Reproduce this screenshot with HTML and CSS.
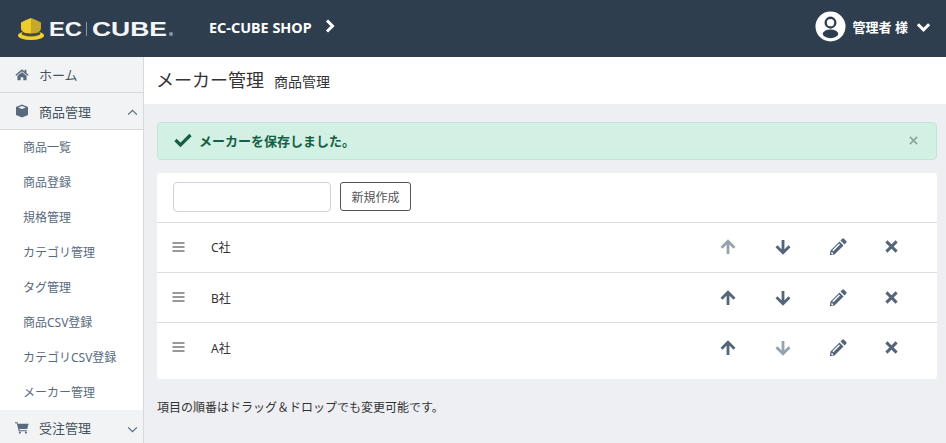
FILE: index.html
```html
<!DOCTYPE html>
<html lang="ja">
<head>
    <meta charset="UTF-8">
    <title>メーカー管理 商品管理</title>
    <link rel="stylesheet" href="styles.css">
</head>
<body>
    <header class="topbar">
        <div class="brand">
            <svg class="brand-hat" viewBox="0 0 26 22" width="26" height="22">
                <ellipse cx="13" cy="17.500" rx="13" ry="4.500" fill="#f2d22c"/>
                <ellipse cx="13" cy="15.500" rx="9.500" ry="3" fill="#4b4a3c"/>
                <path d="M3 4.500Q8 1.500 13 0V15.500Q6 15.500 4 13Q3 11.500 3 10z" fill="#f0cc2a"/>
                <path d="M23 4.500Q18 1.500 13 0V15.500Q20 15.500 22 13Q23 11.500 23 10z" fill="#c4a92b"/>
            </svg>
            <svg class="brand-word" viewBox="0 0 126 20" width="126" height="20">
                <text x="0" y="17" textLength="33" lengthAdjust="spacingAndGlyphs" class="brand-text">EC</text>
                <rect x="37" y="3" width="1" height="14" fill="#8a96a0"/>
                <text x="43" y="17" textLength="75" lengthAdjust="spacingAndGlyphs" class="brand-text">CUBE</text>
                <circle cx="122" cy="15" r="2" fill="#8a96a0"/>
            </svg>
        </div>
        <div class="shop">EC-CUBE SHOP</div>
        <svg class="shop-arrow" viewBox="0 0 10 14" width="10" height="14"><path d="M2 1.500 7.500 7 2 12.500" fill="none" stroke="#fff" stroke-width="3"/></svg>
        <div class="user">
            <svg viewBox="0 0 32 32" width="31" height="31">
                <circle cx="16" cy="16" r="15.500" fill="#fff"/>
                <circle cx="16" cy="12" r="5" fill="none" stroke="#2f3e4f" stroke-width="2.400"/>
                <ellipse cx="16" cy="23.500" rx="8" ry="4.500" fill="#2f3e4f"/>
            </svg>
            <span class="user-name">管理者 様</span>
            <svg viewBox="0 0 16 10" width="15" height="10"><path d="M2 2 8 8 14 2" fill="none" stroke="#fff" stroke-width="3.200"/></svg>
        </div>
    </header>
    <div class="layout">
        <nav class="sidenav">
            <div class="nav-top">
                <svg class="nav-icon" viewBox="0 0 16 14" width="14" height="13"><path d="M8 1 0.500 7.200 1.500 8.400 8 3.200l6.500 5.200 1-1.200L13 5.100V1.500h-2v2L8 1zM8 4.300 2.800 8.500V13.500h3.700V10h3v3.500h3.700V8.500L8 4.300z" fill="#586b7e"/></svg>
                <span>ホーム</span>
            </div>
            <div class="nav-top nav-open">
                <svg class="nav-icon" viewBox="0 0 14 14" width="14" height="14"><path d="M7 0.500 13 3v8l-6 2.500L1 11V3z" fill="#586b7e"/><path d="M3.200 3.400 7 1.900l3.800 1.500L7 4.900z" fill="#f2f3f5"/></svg>
                <span>商品管理</span>
                <svg class="nav-caret" viewBox="0 0 12 8" width="11" height="7"><path d="M1 6.500 6 1.500l5 5" fill="none" stroke="#586b7e" stroke-width="1.400"/></svg>
            </div>
            <ul class="subnav">
                <li>商品一覧</li>
                <li>商品登録</li>
                <li>規格管理</li>
                <li>カテゴリ管理</li>
                <li>タグ管理</li>
                <li>商品CSV登録</li>
                <li>カテゴリCSV登録</li>
                <li>メーカー管理</li>
            </ul>
            <div class="nav-top">
                <svg class="nav-icon" viewBox="0 0 16 14" width="14" height="13"><path d="M0 1h2.800l.5 1.800H15.500l-1.500 6H5l.3 1.200H13.500v1.200H4.300L2 2.200H0z" fill="#586b7e"/><circle cx="5.500" cy="12.800" r="1.200" fill="#586b7e"/><circle cx="12.500" cy="12.800" r="1.200" fill="#586b7e"/></svg>
                <span>受注管理</span>
                <svg class="nav-caret" viewBox="0 0 12 8" width="11" height="7"><path d="M1 1.500 6 6.500l5-5" fill="none" stroke="#586b7e" stroke-width="1.400"/></svg>
            </div>
        </nav>
        <main class="content">
            <div class="title-bar">
                <h1>メーカー管理</h1>
                <span class="title-sub">商品管理</span>
            </div>
            <div class="body-pad">
                <div class="alert">
                    <svg viewBox="0 0 18 14" width="18" height="14"><path d="M1.500 7 6.500 12 16.500 2" fill="none" stroke="#155f46" stroke-width="3.200"/></svg>
                    <span class="alert-text">メーカーを保存しました。</span>
                    <svg class="alert-close" viewBox="0 0 10 10" width="9" height="9"><path d="M1 1 9 9M9 1 1 9" stroke="#8aa59b" stroke-width="1.800"/></svg>
                </div>
                <div class="card">
                    <div class="card-form">
                        <input class="name-input" type="text">
                        <button class="btn-new">新規作成</button>
                    </div>
                    <div class="maker-row row-first">
                        <svg class="grip" viewBox="0 0 12 10" width="13" height="10"><path d="M0 1h12M0 5h12M0 9h12" stroke="#999" stroke-width="2"/></svg>
                        <span class="maker-name">C社</span>
                        <svg class="act act-up off" viewBox="0 0 16 16" width="16" height="16"><path d="M8 15V2.500M1.500 8.800 8 2.300l6.500 6.500" fill="none" stroke="currentColor" stroke-width="2.800"/></svg>
                        <svg class="act act-down" viewBox="0 0 16 16" width="16" height="16"><path d="M8 1v12.500M1.500 7.200l6.500 6.500 6.500-6.500" fill="none" stroke="currentColor" stroke-width="2.800"/></svg>
                        <svg class="act act-edit" viewBox="0 0 18 18" width="18" height="18"><path d="M13.200 .8 14.500.3 17.700 3.500 17.200 4.800 15.500 6.500 11.500 2.500zM10.500 3.500 14.500 7.500 5.500 16.500 .8 17.200 1.500 12.500zM10 5.600 3.300 12.300 4.300 13.300 11 6.600zM2.700 13.700 2.300 15.700 3.200 16.600 4.300 15.300z" fill="currentColor" fill-rule="evenodd"/></svg>
                        <svg class="act act-del" viewBox="0 0 14 14" width="13" height="13"><path d="M1.500 1.500 12.500 12.500M12.500 1.500 1.500 12.500" stroke="currentColor" stroke-width="3.200"/></svg>
                    </div>
                    <div class="maker-row">
                        <svg class="grip" viewBox="0 0 12 10" width="13" height="10"><path d="M0 1h12M0 5h12M0 9h12" stroke="#999" stroke-width="2"/></svg>
                        <span class="maker-name">B社</span>
                        <svg class="act act-up" viewBox="0 0 16 16" width="16" height="16"><path d="M8 15V2.500M1.500 8.800 8 2.300l6.500 6.500" fill="none" stroke="currentColor" stroke-width="2.800"/></svg>
                        <svg class="act act-down" viewBox="0 0 16 16" width="16" height="16"><path d="M8 1v12.500M1.500 7.200l6.500 6.500 6.500-6.500" fill="none" stroke="currentColor" stroke-width="2.800"/></svg>
                        <svg class="act act-edit" viewBox="0 0 18 18" width="18" height="18"><path d="M13.200 .8 14.500.3 17.700 3.500 17.200 4.800 15.500 6.500 11.500 2.500zM10.500 3.500 14.500 7.500 5.500 16.500 .8 17.200 1.500 12.500zM10 5.600 3.300 12.300 4.300 13.300 11 6.600zM2.700 13.700 2.300 15.700 3.200 16.600 4.300 15.300z" fill="currentColor" fill-rule="evenodd"/></svg>
                        <svg class="act act-del" viewBox="0 0 14 14" width="13" height="13"><path d="M1.500 1.500 12.500 12.500M12.500 1.500 1.500 12.500" stroke="currentColor" stroke-width="3.200"/></svg>
                    </div>
                    <div class="maker-row">
                        <svg class="grip" viewBox="0 0 12 10" width="13" height="10"><path d="M0 1h12M0 5h12M0 9h12" stroke="#999" stroke-width="2"/></svg>
                        <span class="maker-name">A社</span>
                        <svg class="act act-up" viewBox="0 0 16 16" width="16" height="16"><path d="M8 15V2.500M1.500 8.800 8 2.300l6.500 6.500" fill="none" stroke="currentColor" stroke-width="2.800"/></svg>
                        <svg class="act act-down off" viewBox="0 0 16 16" width="16" height="16"><path d="M8 1v12.500M1.500 7.200l6.500 6.500 6.500-6.500" fill="none" stroke="currentColor" stroke-width="2.800"/></svg>
                        <svg class="act act-edit" viewBox="0 0 18 18" width="18" height="18"><path d="M13.200 .8 14.500.3 17.700 3.500 17.200 4.800 15.500 6.500 11.500 2.500zM10.500 3.500 14.500 7.500 5.500 16.500 .8 17.200 1.500 12.500zM10 5.600 3.300 12.300 4.300 13.300 11 6.600zM2.700 13.700 2.300 15.700 3.200 16.600 4.300 15.300z" fill="currentColor" fill-rule="evenodd"/></svg>
                        <svg class="act act-del" viewBox="0 0 14 14" width="13" height="13"><path d="M1.500 1.500 12.500 12.500M12.500 1.500 1.500 12.500" stroke="currentColor" stroke-width="3.200"/></svg>
                    </div>
                </div>
                <p class="note">項目の順番はドラッグ＆ドロップでも変更可能です。</p>
            </div>
        </main>
    </div>
</body>
</html>
```

FILE: styles.css
```css
html, body {
    height: 100%;
}
body {
    margin: 0;
    overflow: hidden;
    font-family: "Noto Sans", "Noto Sans CJK JP", sans-serif;
    font-size: 12px;
    color: #333;
    background-color: #eeeff3;
}
.topbar {
    display: flex;
    align-items: center;
    height: 57px;
    padding: 0 15px 0 18px;
    background-color: #2f3e4f;
    color: #fff;
}
.brand {
    display: flex;
    align-items: center;
    gap: 5px;
    width: 191px;
    margin-top: 1px;
}
.brand-text {
    font-family: "Liberation Sans", sans-serif;
    font-size: 19.500px;
    font-weight: bold;
    fill: #f4f5f6;
}
.shop {
    margin-bottom: 3px;
    font-size: 14.400px;
    font-weight: bold;
}
.shop-arrow {
    margin-left: 13px;
    margin-bottom: 5px;
}
.user {
    display: flex;
    align-items: center;
    margin-left: auto;
    padding-bottom: 4px;
}
.user-name {
    margin: 0 8px 0 7px;
    font-size: 13px;
    font-weight: bold;
}
.layout {
    display: flex;
    height: 386px;
}
.sidenav {
    flex: none;
    width: 143px;
    overflow: hidden;
    border-right: 1px solid #d8d9dd;
    background-color: #f2f3f5;
}
.nav-top {
    display: flex;
    align-items: center;
    height: 36px;
    padding: 0 5px 0 15px;
    border-bottom: 1px solid #d8d9dd;
    box-sizing: border-box;
    font-size: 13px;
    color: #44535f;
}
.nav-open {
    height: 37px;
}
.nav-top span {
    margin-left: 10px;
}
.nav-icon {
    flex: none;
}
.nav-caret {
    margin-left: auto;
    margin-top: 3px;
}
.subnav {
    margin: 0;
    padding: 0;
    list-style: none;
    background-color: #fff;
}
.subnav li {
    height: 35px;
    padding-left: 23px;
    line-height: 35px;
    font-size: 12px;
    color: #586b7e;
}
.content {
    flex: 1;
    min-width: 0;
}
.title-bar {
    display: flex;
    align-items: baseline;
    height: 47px;
    padding-left: 12px;
    background-color: #fff;
    line-height: 47px;
}
.title-bar h1 {
    margin: 0;
    font-size: 18px;
    font-weight: normal;
    color: #333;
}
.title-sub {
    margin-left: 10px;
    font-size: 14px;
}
.body-pad {
    padding: 18px 9px 0 13px;
}
.alert {
    display: flex;
    align-items: center;
    height: 38px;
    padding: 0 18px 2px 16px;
    border: 1px solid #c3e6d9;
    border-radius: 4px;
    box-sizing: border-box;
    background-color: #d3f0e4;
    color: #155f46;
}
.alert-text {
    margin-left: 7px;
    font-size: 13px;
    font-weight: bold;
}
.alert-close {
    margin-left: auto;
}
.card {
    margin-top: 13px;
    border-radius: 4px;
    background-color: #fff;
}
.card-form {
    display: flex;
    align-items: center;
    gap: 9px;
    height: 49px;
    padding: 0 16px 1px;
    box-sizing: border-box;
}
.name-input {
    width: 158px;
    height: 30px;
    padding: 0 8px;
    border: 1px solid #ced4da;
    border-radius: 4px;
    box-sizing: border-box;
}
.btn-new {
    width: 71px;
    height: 29px;
    margin-bottom: 1px;
    padding: 0;
    border: 1px solid #555;
    border-radius: 3px;
    background-color: #fff;
    font-family: inherit;
    font-size: 12px;
    color: #555;
}
.maker-row {
    display: flex;
    align-items: center;
    height: 50px;
    padding-left: 15px;
    border-top: 1px solid #ddd;
    box-sizing: border-box;
    font-size: 12px;
}
.row-first {
    padding-bottom: 2px;
}
.maker-row:last-child {
    height: 57px;
    padding-bottom: 7px;
}
.grip {
    margin-bottom: 2px;
}
.row-first .grip {
    margin-bottom: 0;
}
.maker-name {
    margin-left: 26px;
    width: 509px;
}
.act {
    flex: none;
    color: #54657a;
}
.act.off {
    color: #96a3af;
}
.act-down {
    margin-left: 39px;
}
.act-edit {
    margin-left: 38px;
}
.act-del {
    margin-left: 38px;
}
.note {
    margin: 19px 0 0;
    font-size: 12px;
    color: #333;
}
```
